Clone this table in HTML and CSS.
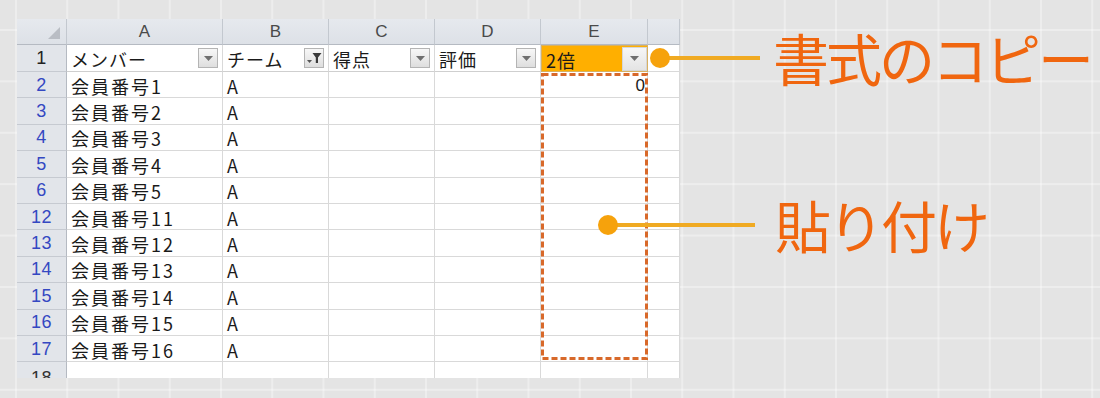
FILE: index.html
```html
<!DOCTYPE html>
<html lang="ja">
<head>
<meta charset="utf-8">
<title>書式のコピー</title>
<link rel="stylesheet" href="styles.css">
</head>
<body>
<div class="canvas">
  <div class="sheet">
    <div class="grid">
      <div class="ch corner"><span class="corner-tri"></span></div>
      <div class="ch">A</div>
      <div class="ch">B</div>
      <div class="ch">C</div>
      <div class="ch">D</div>
      <div class="ch">E</div>
      <div class="ch"></div>

      <div class="rh rh-first">1</div>
      <div class="c hd"><span>メンバー</span><span class="fbtn"><svg width="9" height="5" viewBox="0 0 9 5"><polygon points="0,0 9,0 4.5,5" fill="#6f6f6f"/></svg></span></div>
      <div class="c hd"><span>チーム</span><span class="fbtn"><svg width="15" height="12" viewBox="0 0 15 12"><polygon points="0,8 5,8 2.5,11" fill="#555"/><polygon points="5.5,1 14.5,1 11,5.5 11,11 8.8,11 8.8,5.5" fill="#3a3a3a"/></svg></span></div>
      <div class="c hd"><span>得点</span><span class="fbtn"><svg width="9" height="5" viewBox="0 0 9 5"><polygon points="0,0 9,0 4.5,5" fill="#6f6f6f"/></svg></span></div>
      <div class="c hd"><span>評価</span><span class="fbtn"><svg width="9" height="5" viewBox="0 0 9 5"><polygon points="0,0 9,0 4.5,5" fill="#6f6f6f"/></svg></span></div>
      <div class="c hd hd-active"><span>2倍</span><span class="fbtn fbtn-wide"><svg width="9" height="5" viewBox="0 0 9 5"><polygon points="0,0 9,0 4.5,5" fill="#6f6f6f"/></svg></span></div>
      <div class="c"></div>

      <div class="rh">2</div><div class="c">会員番号1</div><div class="c">A</div><div class="c"></div><div class="c"></div><div class="c num">0</div><div class="c"></div>
      <div class="rh">3</div><div class="c">会員番号2</div><div class="c">A</div><div class="c"></div><div class="c"></div><div class="c"></div><div class="c"></div>
      <div class="rh">4</div><div class="c">会員番号3</div><div class="c">A</div><div class="c"></div><div class="c"></div><div class="c"></div><div class="c"></div>
      <div class="rh">5</div><div class="c">会員番号4</div><div class="c">A</div><div class="c"></div><div class="c"></div><div class="c"></div><div class="c"></div>
      <div class="rh">6</div><div class="c">会員番号5</div><div class="c">A</div><div class="c"></div><div class="c"></div><div class="c"></div><div class="c"></div>
      <div class="rh">12</div><div class="c">会員番号11</div><div class="c">A</div><div class="c"></div><div class="c"></div><div class="c"></div><div class="c"></div>
      <div class="rh">13</div><div class="c">会員番号12</div><div class="c">A</div><div class="c"></div><div class="c"></div><div class="c"></div><div class="c"></div>
      <div class="rh">14</div><div class="c">会員番号13</div><div class="c">A</div><div class="c"></div><div class="c"></div><div class="c"></div><div class="c"></div>
      <div class="rh">15</div><div class="c">会員番号14</div><div class="c">A</div><div class="c"></div><div class="c"></div><div class="c"></div><div class="c"></div>
      <div class="rh">16</div><div class="c">会員番号15</div><div class="c">A</div><div class="c"></div><div class="c"></div><div class="c"></div><div class="c"></div>
      <div class="rh">17</div><div class="c">会員番号16</div><div class="c">A</div><div class="c"></div><div class="c"></div><div class="c"></div><div class="c"></div>
      <div class="rh rh-black">18</div><div class="c"></div><div class="c"></div><div class="c"></div><div class="c"></div><div class="c"></div><div class="c"></div>
    </div>
  </div>

  <svg class="paste-box" width="107" height="287" viewBox="0 0 107 287">
    <rect x="1.5" y="1.5" width="104" height="284" fill="none" stroke="#d8692a" stroke-width="3" stroke-dasharray="6 3"/>
  </svg>

  <div class="callout callout-copy">
    <span class="dot"></span><span class="lead lead-copy"></span><span class="label label-copy">書式のコピー</span>
  </div>
  <div class="callout callout-paste">
    <span class="dot"></span><span class="lead lead-paste"></span><span class="label label-paste">貼り付け</span>
  </div>
</div>
</body>
</html>
```

FILE: styles.css
```css
html, body {
  margin: 0;
  padding: 0;
}

body {
  background: #e4e4e4;
}

.canvas {
  position: relative;
  width: 1100px;
  height: 398px;
  overflow: hidden;
  box-sizing: border-box;
  padding: 19px 0 0 17px;
  background-color: #e4e4e4;
  background-image:
    linear-gradient(to right, rgba(255,255,255,0.35) 2px, transparent 2px),
    linear-gradient(to bottom, rgba(255,255,255,0.35) 2px, transparent 2px);
  background-size: 51.25px 51.4px;
  background-position: 15px 29px;
}

.sheet {
  width: 663px;
  height: 359px;
  overflow: hidden;
  background: #fff;
}

.grid {
  display: grid;
  grid-template-columns: 50px 156px 106px 106px 106px 107px 32px;
  grid-template-rows: 26px 27px repeat(11, 26.4px) 30px;
  font-family: "Noto Sans CJK JP", "Noto Sans", sans-serif;
  color: #111;
}

.ch {
  box-sizing: border-box;
  background: linear-gradient(#e6e9ee, #dde1e7);
  border-right: 1px solid #c3c8cf;
  border-bottom: 1px solid #b5bac2;
  display: flex;
  align-items: center;
  justify-content: center;
  font-family: "Liberation Sans", Arial, sans-serif;
  font-size: 17px;
  color: #4a4a4a;
  padding-top: 1px;
}

.corner {
  position: relative;
}

.corner-tri {
  position: absolute;
  right: 6px;
  bottom: 5px;
  width: 0;
  height: 0;
  border-left: 12px solid transparent;
  border-bottom: 12px solid #b9bdc4;
}

.rh {
  box-sizing: border-box;
  background: #e2e5ea;
  border-right: 1px solid #b5bac2;
  border-bottom: 1px solid #c6cad1;
  display: flex;
  align-items: center;
  justify-content: center;
  font-family: "Liberation Sans", Arial, sans-serif;
  font-size: 18px;
  color: #3448c2;
  letter-spacing: 0.5px;
  padding-top: 1px;
}

.rh-first {
  color: #222;
}

.rh-black {
  color: #333;
  align-items: flex-start;
  padding-top: 6px;
}

.c {
  box-sizing: border-box;
  border-right: 1px solid #d9d9d9;
  border-bottom: 1px solid #d9d9d9;
  display: flex;
  align-items: center;
  padding-left: 4px;
  font-size: 18px;
  letter-spacing: 2px;
  white-space: nowrap;
  overflow: hidden;
  padding-top: 2px;
  color: #1a1a1a;
}

.hd {
  justify-content: space-between;
  border-bottom-color: #cfcfcf;
  padding-top: 0;
}

.hd span:first-child {
  padding-top: 2px;
  letter-spacing: 1px;
}

.hd-active {
  background: #ffaf00;
  border: 1px solid #d8b060;
}

.num {
  justify-content: flex-end;
  padding-right: 2px;
  font-family: "Liberation Sans", Arial, sans-serif;
  font-size: 17px;
  letter-spacing: 0;
}

.fbtn {
  flex: none;
  width: 20px;
  height: 20px;
  margin-right: 4px;
  box-sizing: border-box;
  border: 1px solid #b4b4b4;
  background: linear-gradient(#f7f7f7, #dedede);
  display: flex;
  align-items: center;
  justify-content: center;
}

.fbtn-wide {
  width: 25px;
  height: 24px;
  margin-right: 0;
  border-color: #d6d6d6;
  background: linear-gradient(#f6f6f6, #e4e4e4);
}

.paste-box {
  position: absolute;
  left: 541px;
  top: 73px;
}

.callout {
  position: absolute;
  display: flex;
  align-items: center;
  height: 56px;
}

.callout-copy {
  left: 650px;
  top: 30px;
}

.callout-paste {
  left: 598px;
  top: 197px;
}

.dot {
  flex: none;
  width: 20px;
  height: 20px;
  border-radius: 50%;
  background: #f6a20c;
  position: relative;
  z-index: 1;
}

.lead {
  flex: none;
  height: 4px;
  background: #f0aa22;
  margin-left: -2px;
}

.lead-copy {
  width: 92px;
}

.lead-paste {
  width: 139px;
}

.label {
  font-family: "Noto Sans CJK JP", "Noto Sans", sans-serif;
  font-size: 56px;
  line-height: 56px;
  letter-spacing: -3px;
  color: #f0660f;
  white-space: nowrap;
  padding-bottom: 2px;
}

.label-copy {
  margin-left: 13px;
}

.label-paste {
  margin-left: 20px;
}
```
